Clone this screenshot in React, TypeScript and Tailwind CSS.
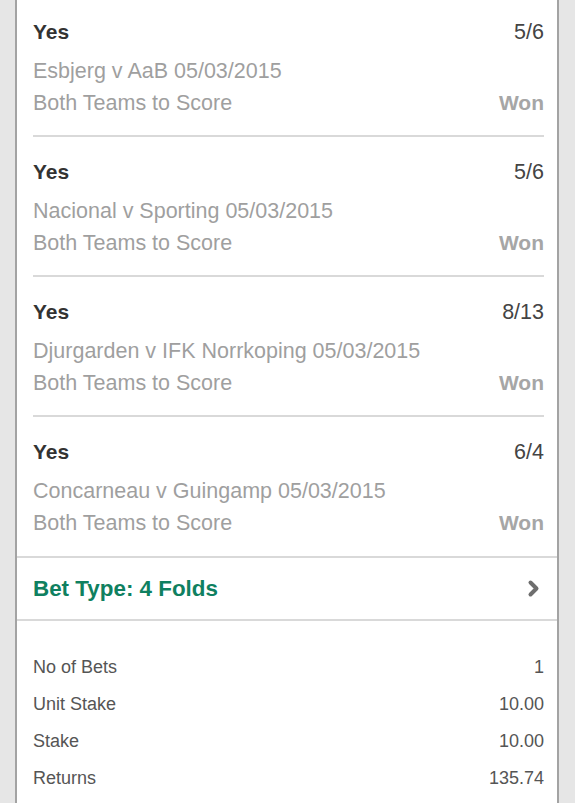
const selections = [
  { match: 'Esbjerg v AaB 05/03/2015', odds: '5/6' },
  { match: 'Nacional v Sporting 05/03/2015', odds: '5/6' },
  { match: 'Djurgarden v IFK Norrkoping 05/03/2015', odds: '8/13' },
  { match: 'Concarneau v Guingamp 05/03/2015', odds: '6/4' },
];

const summary = [
  { label: 'No of Bets', value: '1' },
  { label: 'Unit Stake', value: '10.00' },
  { label: 'Stake', value: '10.00' },
  { label: 'Returns', value: '135.74' },
];

export default function App() {
  return (
    <div className="flex h-[803px] w-full overflow-hidden bg-[#e6e6e6] font-['Liberation_Sans',Arial,sans-serif]">
      <div className="ml-[15px] mr-[16px] flex flex-1 flex-col border-x-2 border-[#a3a3a3] bg-white">
        {/* Selections */}
        <div className="border-b-2 border-[#d9d9d9] pl-[16px] pr-[13px]">
          {selections.map((s, i) => (
            <div
              key={s.match}
              className={`${i === 0 ? 'pt-[16px]' : 'pt-[19px]'} ${
                i < selections.length - 1 ? 'pb-[16px] border-b-2 border-[#d9d9d9]' : 'pb-[17px]'
              }`}
            >
              <div className="flex h-[32px] items-center justify-between leading-[32px]">
                <span className="text-[21px] font-bold text-[#333]">Yes</span>
                <span className="text-[21.5px] text-[#444]">{s.odds}</span>
              </div>
              <div className="mt-[7px] h-[32px] text-[21.5px] leading-[32px] text-[#9f9f9f]">{s.match}</div>
              <div className="flex h-[32px] items-center justify-between leading-[32px]">
                <span className="text-[21.5px] text-[#9f9f9f]">Both Teams to Score</span>
                <span className="text-[21px] font-bold text-[#a6a6a6]">Won</span>
              </div>
            </div>
          ))}
        </div>

        {/* Bet type */}
        <div className="flex h-[63px] items-center justify-between border-b-2 border-[#d9d9d9] pl-[16px] pr-[17px]">
          <span className="text-[22.4px] font-bold text-[#0f8060]">Bet Type: 4 Folds</span>
          <svg width="13" height="19" viewBox="0 0 13 19" fill="none">
            <path d="M3.5 3.5l6 6-6 6" stroke="#6e6e6e" strokeWidth="4" strokeLinecap="round" strokeLinejoin="round" />
          </svg>
        </div>

        {/* Summary */}
        <div className="pl-[16px] pr-[13px] pt-[28px]">
          {summary.map((r) => (
            <div key={r.label} className="flex h-[37px] items-center justify-between text-[18px] text-[#555]">
              <span>{r.label}</span>
              <span>{r.value}</span>
            </div>
          ))}
        </div>
      </div>
    </div>
  );
}
